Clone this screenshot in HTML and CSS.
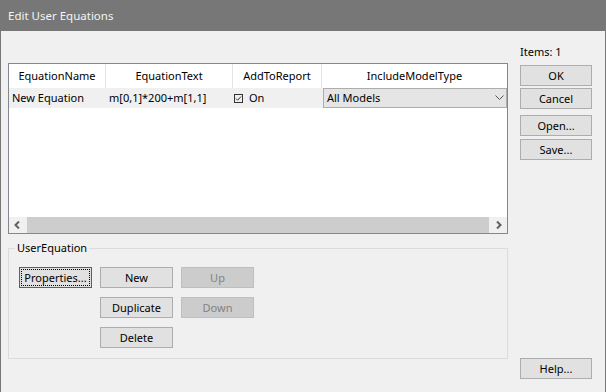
FILE: index.html
```html
<!DOCTYPE html>
<html lang="en">
<head>
    <meta charset="UTF-8">
    <title>Edit User Equations</title>
    <link rel="stylesheet" href="styles.css">
</head>
<body>
<div class="window">
    <div class="titlebar">Edit User Equations</div>
    <div class="content">
        <div class="main">
            <div class="grid">
                <div class="row header">
                    <div class="cell c1">EquationName</div>
                    <div class="cell c2">EquationText</div>
                    <div class="cell c3">AddToReport</div>
                    <div class="cell c4">IncludeModelType</div>
                </div>
                <div class="row data">
                    <div class="cell c1">New Equation</div>
                    <div class="cell c2">m[0,1]*200+m[1,1]</div>
                    <div class="cell c3">
                        <svg class="check" width="9" height="9" viewBox="0 0 9 9">
                            <rect x="0.5" y="0.5" width="8" height="8" fill="none" stroke="#333"/>
                            <path d="M2 4.5 L3.7 6.2 L7 2.5" fill="none" stroke="#333" stroke-width="1"/>
                        </svg>
                        <span>On</span>
                    </div>
                    <div class="cell c4">
                        <div class="combo">
                            <span>All Models</span>
                            <svg width="9" height="6" viewBox="0 0 9 6">
                                <path d="M0.5 0.5 L4.5 4.5 L8.5 0.5" fill="none" stroke="#555"/>
                            </svg>
                        </div>
                    </div>
                </div>
                <div class="filler"></div>
                <div class="hscroll">
                    <div class="arrow">
                        <svg width="7" height="8" viewBox="0 0 7 8"><path d="M5 0.5 L1.5 4 L5 7.5" fill="none" stroke="#606060" stroke-width="2"/></svg>
                    </div>
                    <div class="thumb"></div>
                    <div class="arrow">
                        <svg width="7" height="8" viewBox="0 0 7 8"><path d="M2 0.5 L5.5 4 L2 7.5" fill="none" stroke="#606060" stroke-width="2"/></svg>
                    </div>
                </div>
            </div>
            <fieldset class="group">
                <legend>UserEquation</legend>
                <div class="group-buttons">
                    <button class="btn focused"><span>Properties...</span></button>
                    <button class="btn">New</button>
                    <button class="btn" disabled>Up</button>
                    <button class="btn slot2">Duplicate</button>
                    <button class="btn" disabled>Down</button>
                    <button class="btn slot2">Delete</button>
                </div>
            </fieldset>
        </div>
        <div class="side">
            <div class="items">Items: 1</div>
            <button class="btn ok">OK</button>
            <button class="btn cancel">Cancel</button>
            <button class="btn open">Open...</button>
            <button class="btn save">Save...</button>
            <button class="btn help">Help...</button>
        </div>
    </div>
</div>
</body>
</html>
```

FILE: styles.css
```css
body {
    margin: 0;
    font-family: "Noto Sans", "Open Sans", sans-serif;
    font-size: 11px;
    color: #000;
}
.window {
    width: 606px;
    height: 392px;
    box-sizing: border-box;
    border-left: 1px solid #777;
    border-right: 1px solid #777;
    background: #f0f0f0;
    display: flex;
    flex-direction: column;
}
.titlebar {
    height: 31px;
    line-height: 31px;
    background: #777777;
    color: #f4f4f4;
    padding-left: 8px;
    margin: 0 -1px;
    font-size: 11.5px;
}
.content {
    flex: 1;
    display: flex;
    padding: 0 13px 13px 7px;
}
.main {
    width: 500px;
    padding-top: 32px;
}
.grid {
    height: 171px;
    box-sizing: border-box;
    border: 1px solid #828790;
    background: #fff;
    display: flex;
    flex-direction: column;
}
.row {
    display: flex;
}
.cell {
    box-sizing: border-box;
    white-space: nowrap;
    overflow: hidden;
}
.c1 { width: 97px; }
.c2 { width: 127px; }
.c3 { width: 89px; }
.c4 { width: 185px; }
.header {
    height: 24px;
    line-height: 24px;
}
.header .cell {
    text-align: center;
    border-right: 1px solid #e5e5e5;
}
.header .c4 {
    border-right: none;
}
.data {
    height: 20px;
    line-height: 20px;
    background: #f0f0f0;
}
.data .c1 { padding-left: 3px; }
.data .c2 { padding-left: 3px; }
.data .c3 {
    display: flex;
    align-items: center;
    gap: 6px;
    padding-left: 1px;
}
.data .c4 {
    padding-left: 1px;
    overflow: visible;
}
.combo {
    height: 20px;
    box-sizing: border-box;
    border: 1px solid #adadad;
    background: #e5e5e5;
    display: flex;
    align-items: center;
    justify-content: space-between;
    padding: 0 2px 0 3px;
    line-height: 18px;
}
.filler {
    flex: 1;
}
.hscroll {
    height: 16px;
    display: flex;
    background: #f0f0f0;
}
.hscroll .arrow {
    width: 17px;
    display: flex;
    align-items: center;
    justify-content: center;
}
.hscroll .thumb {
    flex: 1;
    margin: 0 1px;
    background: #cdcdcd;
}
.group {
    margin: 6px 0 0 0;
    height: 119px;
    box-sizing: border-box;
    border: 1px solid #dcdcdc;
    padding: 0;
}
.group legend {
    margin-left: 6px;
    padding: 0 2px;
    line-height: 16px;
}
.group-buttons {
    display: grid;
    grid-template-columns: repeat(3, 73px);
    column-gap: 8px;
    row-gap: 9px;
    padding: 11px 0 0 10px;
}
.group-buttons .slot2 {
    grid-column: 2;
}
.btn {
    height: 21px;
    width: 73px;
    box-sizing: border-box;
    border: 1px solid #adadad;
    background: #e1e1e1;
    font-family: inherit;
    font-size: 11px;
    color: #000;
    padding: 0;
    margin: 0;
}
.btn:disabled {
    background: #cccccc;
    border-color: #bfbfbf;
    color: #838383;
}
.btn.focused {
    border: 1px solid #0078d7;
    padding: 1px;
}
.btn.focused span {
    display: block;
    height: 100%;
    box-sizing: border-box;
    border: 1px dotted #000;
    line-height: 15px;
}
.side {
    margin-left: 12px;
    width: 72px;
    display: flex;
    flex-direction: column;
}
.side .btn {
    width: 72px;
}
.items {
    margin-top: 13px;
    line-height: 16px;
}
.ok { margin-top: 5px; }
.cancel { margin-top: 2px; }
.open { margin-top: 6px; }
.save { margin-top: 3px; }
.help { margin-top: auto; }
```
